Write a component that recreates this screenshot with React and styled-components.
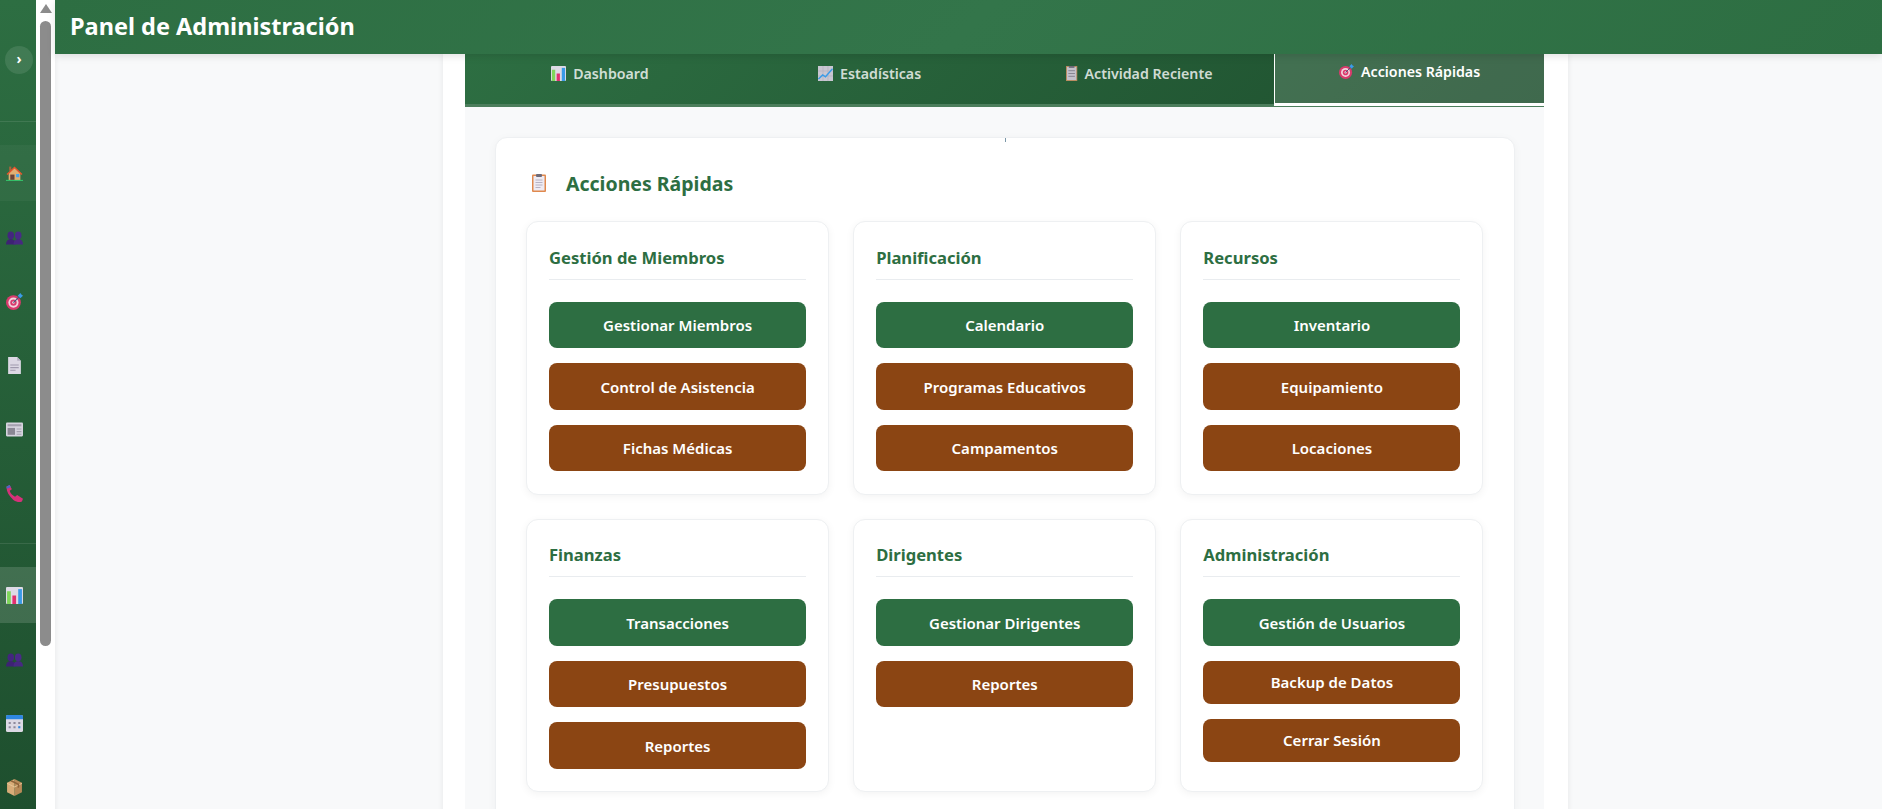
import React from 'react';
import styled, { createGlobalStyle } from 'styled-components';

const GlobalStyle = createGlobalStyle`
  html, body {
    margin: 0;
    height: 809px;
    overflow: hidden;
    background: #ffffff;
    font-family: "Noto Sans", "Open Sans", sans-serif;
  }
  * { box-sizing: border-box; }
`;

/* emoji style pictures */
const HomeIcon = () => (
  <svg viewBox="0 0 16 16" width="17" height="17">
    <rect x="3" y="1.5" width="2" height="4" fill="#a8643c" />
    <path d="M2.5 7.5 8 2.5l5.5 5V14h-11z" fill="#e0b074" />
    <path d="M.5 8.5 8 1.5l7.5 7-1 .8L8 3.4 1.5 9.3z" fill="#e8552d" />
    <rect x="4" y="9" width="4" height="5" fill="#6d4438" />
    <rect x="9.5" y="8.5" width="3" height="3" fill="#43a5ee" />
    <rect x="0" y="14" width="16" height="1" fill="#35c46b" />
  </svg>
);

const UsersIcon = () => (
  <svg viewBox="0 0 16 16" width="17" height="17">
    <ellipse cx="4.500" cy="6" rx="3.100" ry="3.600" fill="#43267e" />
    <ellipse cx="11.500" cy="6" rx="3.100" ry="3.600" fill="#4a2a88" />
    <path d="M0 14.500c0-3 1.500-5 4.500-5s4.500 2 4.500 5z" fill="#3d2274" />
    <path d="M7 14.500c0-3 1.500-5 4.500-5s4.500 2 4.500 5z" fill="#472882" />
  </svg>
);

const TargetIcon = () => (
  <svg viewBox="0 0 16 16" width="17" height="17">
    <circle cx="7" cy="9" r="7" fill="#d93a6c" />
    <circle cx="7" cy="9" r="4.800" fill="#f3d5dd" />
    <circle cx="7" cy="9" r="3" fill="#d93a6c" />
    <circle cx="7" cy="9" r="1.200" fill="#f3d5dd" />
    <path d="M7 9 13 3" stroke="#3d5a80" strokeWidth="1" />
    <path d="m11 2.500 2.500-2.500 1 1.500L16 2.500 13.500 5z" fill="#3a9be8" />
  </svg>
);

const PageIcon = () => (
  <svg viewBox="0 0 16 16" width="17" height="17">
    <path d="M2 0h8.500L14 3.500V16H2z" fill="#dcd8e4" />
    <path d="M10.500 0 14 3.500h-3.500z" fill="#b4afc2" />
    <path d="M4 7.500h8M4 10h8M4 12.500h5" stroke="#a09aae" strokeWidth="1" />
  </svg>
);

const NewsIcon = () => (
  <svg viewBox="0 0 16 16" width="17" height="17">
    <rect x="0" y="1.500" width="16" height="13" rx="1" fill="#d6d3de" />
    <rect x="1.500" y="3" width="13" height="2" fill="#a5a1b0" />
    <rect x="1.500" y="6.500" width="7" height="6.500" fill="#8a8794" />
    <path d="M10 7.500h4.500M10 10h4.500M10 12.500h4.500" stroke="#a5a1b0" strokeWidth="1" />
  </svg>
);

const PhoneIcon = () => (
  <svg viewBox="0 0 16 16" width="17" height="17">
    <path d="M.5 1.500 3.500 0l2 4-2 1.500c.8 2.500 2.500 4.500 5 5.500l2-1.500 5.500 3.500-1 2.500c-2.500 1-5 .5-8-1.500C2.500 10 .3 5.500.5 1.500z" fill="#d6317a" />
    <path d="M.5 1.500 3.500 0l1 2-3.800 1.500z" fill="#4d66c4" />
  </svg>
);

const ChartIcon = () => (
  <svg viewBox="0 0 16 16" width="17" height="17">
    <rect x="0" y="0" width="16" height="16" rx="1" fill="#dedbe6" />
    <rect x="1" y="4" width="3.500" height="12" fill="#7fd65a" />
    <rect x="6" y="8" width="3.500" height="8" fill="#e2306f" />
    <rect x="11.500" y="2" width="3.500" height="14" fill="#3a9be8" />
  </svg>
);

const TrendIcon = () => (
  <svg viewBox="0 0 16 16" width="16" height="16">
    <rect x="0" y="0" width="16" height="16" fill="#c9c7d2" />
    <path d="M0 5.300h16M0 10.600h16M5.300 0v16M10.600 0v16" stroke="#aeabb9" strokeWidth=".6" />
    <path d="M.5 14 5 9.500l3 2L15.500 3" stroke="#3a9be8" strokeWidth="1.500" fill="none" />
  </svg>
);

const CalendarIcon = () => (
  <svg viewBox="0 0 16 16" width="17" height="17">
    <rect x="0" y="0" width="16" height="16" rx="1.500" fill="#dcd9e4" />
    <path d="M0 1.500A1.500 1.500 0 0 1 1.500 0h13A1.500 1.500 0 0 1 16 1.500V4H0z" fill="#2e86e0" />
    <path d="M2.500 6.500h2v2h-2zM7 6.500h2v2H7zM11.500 6.500h2v2h-2zM2.500 10.500h2v2h-2zM7 10.500h2v2H7z" fill="#8e8a9c" />
    <path d="M11.500 10.500h2v2h-2z" fill="#2e86e0" />
  </svg>
);

const BoxIcon = () => (
  <svg viewBox="0 0 16 16" width="17" height="17">
    <path d="M8 0 15 3.500v9L8 16z" fill="#b88a58" />
    <path d="M8 0 1 3.500v9L8 16z" fill="#d8ac78" />
    <path d="M1 3.500 8 7l7-3.500v1L8 8 1 4.500z" fill="#e6c596" />
    <path d="M4 2 11 5.500v3l1.500-.7v-3L5.500 1.200z" fill="#8e6238" />
  </svg>
);

const ClipboardIcon = () => (
  <svg viewBox="0 0 14 18" width="14" height="18">
    <rect x="0" y="0.500" width="14" height="17.500" rx="1" fill="#e0894e" />
    <rect x="1.500" y="2" width="11" height="14.500" fill="#eeebf3" />
    <path d="M3.500 6h7M3.500 8.500h7M3.500 11h7M3.500 13.500h5" stroke="#a8a3b6" strokeWidth=".8" />
    <rect x="4" y="0" width="6" height="3" rx="1" fill="#6e6a78" />
  </svg>
);

const ReportIcon = () => (
  <svg viewBox="0 0 12 16" width="12" height="16">
    <rect x="0" y="0" width="12" height="16" fill="#b98a5c" />
    <rect x="1" y="1" width="10" height="14" fill="#c4c1cb" />
    <path d="M2.500 5h7M2.500 8h7M2.500 11h7" stroke="#85828e" strokeWidth="1" />
    <rect x="3" y="0" width="6" height="2" fill="#6e6a78" />
  </svg>
);

const SideGroups = [
  [
    { id: 'inicio', icon: <HomeIcon />, hint: true },
    { id: 'miembros', icon: <UsersIcon /> },
    { id: 'objetivos', icon: <TargetIcon /> },
    { id: 'documentos', icon: <PageIcon /> },
    { id: 'noticias', icon: <NewsIcon /> },
    { id: 'contacto', icon: <PhoneIcon /> },
  ],
  [
    { id: 'panel', icon: <ChartIcon />, active: true },
    { id: 'dirigentes', icon: <UsersIcon /> },
    { id: 'calendario', icon: <CalendarIcon /> },
    { id: 'inventario', icon: <BoxIcon /> },
  ],
];

const TABS = [
  { label: 'Dashboard', icon: <ChartIcon /> },
  { label: 'Estadísticas', icon: <TrendIcon /> },
  { label: 'Actividad Reciente', icon: <ReportIcon /> },
  { label: 'Acciones Rápidas', icon: <TargetIcon />, active: true },
];

const GROUPS = [
  { title: 'Gestión de Miembros', actions: ['Gestionar Miembros', 'Control de Asistencia', 'Fichas Médicas'] },
  { title: 'Planificación', actions: ['Calendario', 'Programas Educativos', 'Campamentos'] },
  { title: 'Recursos', actions: ['Inventario', 'Equipamiento', 'Locaciones'] },
  { title: 'Finanzas', actions: ['Transacciones', 'Presupuestos', 'Reportes'] },
  { title: 'Dirigentes', actions: ['Gestionar Dirigentes', 'Reportes'] },
  { title: 'Administración', actions: ['Gestión de Usuarios', 'Backup de Datos', 'Cerrar Sesión'], compact: true },
];

const Shell = styled.div`
  display: flex;
  height: 809px;
  overflow: hidden;
`;

const Sidebar = styled.aside`
  width: 36px;
  flex-shrink: 0;
  background: linear-gradient(180deg, #2d6e42 0%, #1e4f2e 100%);
`;

const ToggleZone = styled.div`
  height: 122px;
  padding: 46px 0 0 5px;
  border-bottom: 1px solid rgba(255, 255, 255, 0.1);
`;

const Toggle = styled.button`
  width: 28px;
  height: 28px;
  padding: 0 0 3px;
  border: none;
  border-radius: 50%;
  background: rgba(255, 255, 255, 0.1);
  color: #ffffff;
  font: 700 14px "Noto Sans", sans-serif;
`;

const SideGroup = styled.nav`
  display: flex;
  flex-direction: column;
  gap: 8px;
  height: ${(p) => p.$height}px;
  padding-top: 23px;
  border-bottom: ${(p) => (p.$divided ? '1px solid rgba(255, 255, 255, 0.1)' : 'none')};
`;

const SideItem = styled.a`
  display: flex;
  align-items: center;
  flex-shrink: 0;
  height: 56px;
  padding-left: 6px;
  background: ${(p) => (p.$active ? 'rgba(255, 255, 255, 0.14)' : p.$hint ? 'rgba(255, 255, 255, 0.04)' : 'transparent')};
`;

const ScrollTrack = styled.div`
  display: flex;
  flex-direction: column;
  align-items: center;
  width: 19px;
  flex-shrink: 0;
  padding-top: 4px;
  background: #ffffff;
`;

const ScrollArrow = styled.div`
  width: 0;
  height: 0;
  border-left: 6.5px solid transparent;
  border-right: 6.5px solid transparent;
  border-bottom: 9px solid #8c8c8c;
`;

const ScrollThumb = styled.div`
  width: 11px;
  height: 625px;
  margin-top: 8px;
  border-radius: 6px;
  background: #8c8c8c;
`;

const Main = styled.div`
  flex: 1;
  display: flex;
  flex-direction: column;
  min-width: 0;
`;

const Header = styled.header`
  position: relative;
  z-index: 2;
  display: flex;
  align-items: center;
  flex-shrink: 0;
  height: 54px;
  padding: 0 0 3px 15px;
  background: linear-gradient(135deg, #2d6e42 0%, #33754a 50%, #2d6e42 100%);
  box-shadow: 0 2px 8px rgba(0, 0, 0, 0.12);
`;

const Title = styled.h1`
  margin: 0;
  color: #ffffff;
  font-size: 23.5px;
  font-weight: 700;
`;

const Page = styled.main`
  flex: 1;
  padding-left: 388px;
  background: #f8f9fa;
  box-shadow: inset 6px 0 6px -6px rgba(0, 0, 0, 0.08);
`;

const Container = styled.div`
  width: 1125px;
  height: 100%;
  padding: 0 24px 0 22px;
  background: #ffffff;
  box-shadow: 0 0 6px rgba(0, 0, 0, 0.08);
`;

const TabBar = styled.div`
  display: grid;
  grid-template-columns: repeat(4, 1fr);
  height: 53px;
  background: linear-gradient(135deg, #2d6e42 0%, #1e4f2e 100%);
  border-bottom: 3px solid #4c7e5c;
`;

const Tab = styled.button`
  display: flex;
  align-items: center;
  justify-content: center;
  gap: 7px;
  height: ${(p) => (p.$active ? '52px' : '50px')};
  padding: ${(p) => (p.$active ? '0 0 15px' : '0 0 12px')};
  border: none;
  border-left: ${(p) => (p.$active ? '1px solid #ffffff' : 'none')};
  border-bottom: ${(p) => (p.$active ? '3px solid #ffffff' : 'none')};
  background: ${(p) => (p.$active ? 'rgba(255, 255, 255, 0.15)' : 'transparent')};
  color: ${(p) => (p.$active ? '#ffffff' : 'rgba(255, 255, 255, 0.8)')};
  font: 600 14.2px "Noto Sans", sans-serif;

  svg {
    width: auto;
    height: 15px;
  }
`;

const TabPanel = styled.section`
  height: 100%;
  padding: 30px 29.500px 0 30px;
  background: #f8f9fa;
`;

const Card = styled.div`
  position: relative;
  padding: 30px;
  border: 1px solid #eef0f2;
  border-radius: 12px;
  background: #ffffff;
  box-shadow: 0 2px 10px rgba(0, 0, 0, 0.04);

  &::before {
    content: '';
    position: absolute;
    top: 0;
    left: 50%;
    width: 1px;
    height: 4px;
    background: #7c98a8;
  }
`;

const CardTitle = styled.h2`
  display: flex;
  align-items: center;
  gap: 20px;
  height: 30px;
  margin: 0 0 23px 6px;
  color: #2d6e42;
  font-size: 19.5px;
  font-weight: 700;
`;

const GroupGrid = styled.div`
  display: grid;
  grid-template-columns: repeat(3, 1fr);
  gap: 24px;
`;

const Group = styled.div`
  height: 273.5px;
  padding: 23.9px 22px 22px;
  border: 1px solid #eef0f2;
  border-radius: 12px;
  background: #ffffff;
  box-shadow: 0 2px 8px rgba(0, 0, 0, 0.05);
`;

const GroupTitle = styled.h3`
  margin: 0 0 22px;
  padding-bottom: 9px;
  border-bottom: 1px solid #e9ecef;
  color: #2d6e42;
  font-size: 16.6px;
  font-weight: 700;
  line-height: 24px;
`;

const ActionList = styled.div`
  display: flex;
  flex-direction: column;
  gap: 15px;
`;

const Action = styled.button`
  height: ${(p) => (p.$compact ? '43px' : '46.5px')};
  border: none;
  border-radius: 8px;
  background: ${(p) => (p.$primary ? '#2d6e42' : '#8b4513')};
  color: #ffffff;
  font: 600 15px "Noto Sans", sans-serif;
`;

export default function App() {
  return (
    <>
      <GlobalStyle />
      <Shell>
        <Sidebar>
          <ToggleZone>
            <Toggle>›</Toggle>
          </ToggleZone>
          {SideGroups.map((items, i) => (
            <SideGroup key={i} $divided={i === 0} $height={i === 0 ? 422 : 265}>
              {items.map((item) => (
                <SideItem key={item.id} $active={item.active} $hint={item.hint}>
                  {item.icon}
                </SideItem>
              ))}
            </SideGroup>
          ))}
        </Sidebar>
        <ScrollTrack>
          <ScrollArrow />
          <ScrollThumb />
        </ScrollTrack>
        <Main>
          <Header>
            <Title>Panel de Administración</Title>
          </Header>
          <Page>
            <Container>
              <TabBar>
                {TABS.map((tab) => (
                  <Tab key={tab.label} $active={tab.active}>
                    {tab.icon}
                    {tab.label}
                  </Tab>
                ))}
              </TabBar>
              <TabPanel>
                <Card>
                  <CardTitle>
                    <ClipboardIcon />
                    Acciones Rápidas
                  </CardTitle>
                  <GroupGrid>
                    {GROUPS.map((group) => (
                      <Group key={group.title}>
                        <GroupTitle>{group.title}</GroupTitle>
                        <ActionList>
                          {group.actions.map((action, i) => (
                            <Action key={action} $primary={i === 0} $compact={group.compact && i > 0}>
                              {action}
                            </Action>
                          ))}
                        </ActionList>
                      </Group>
                    ))}
                  </GroupGrid>
                </Card>
              </TabPanel>
            </Container>
          </Page>
        </Main>
      </Shell>
    </>
  );
}
